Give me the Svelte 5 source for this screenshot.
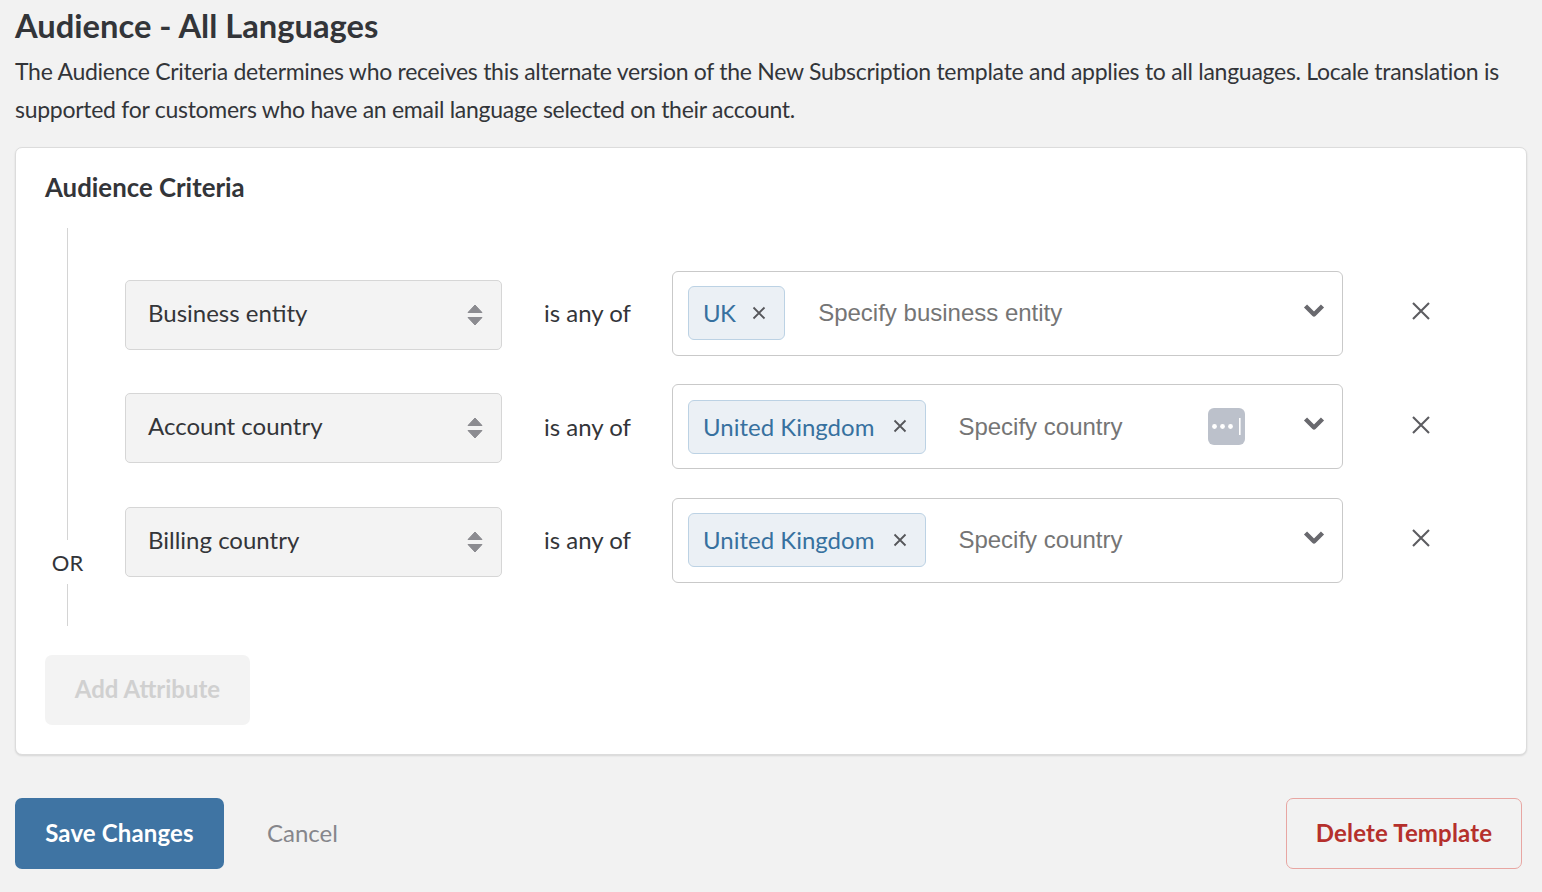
<script>
  const rows = [
    { attr: 'Business entity', chip: 'UK', placeholder: 'Specify business entity', keyIcon: false },
    { attr: 'Account country', chip: 'United Kingdom', placeholder: 'Specify country', keyIcon: true },
    { attr: 'Billing country', chip: 'United Kingdom', placeholder: 'Specify country', keyIcon: false }
  ]
</script>

<main class="page">
  <h1>Audience - All Languages</h1>
  <p class="intro">
    The Audience Criteria determines who receives this alternate version of the New Subscription template and applies to all languages. Locale translation is supported for customers who have an email language selected on their account.
  </p>

  <section class="card">
    <h2>Audience Criteria</h2>
    <div class="criteria">
      <div class="rail">
        <span class="rail-line"></span>
        <span class="rail-label">OR</span>
        <span class="rail-line short"></span>
      </div>
      <div class="rows">
        {#each rows as row}
          <div class="row">
            <div class="select">
              <span class="select-label">{row.attr}</span>
              <svg width="18" height="22" viewBox="0 0 18 22">
                <path d="M9 1 L16 8.5 H2 Z M2 13.5 H16 L9 21 Z" fill="#8b8b90" stroke="#8b8b90" stroke-width="1" stroke-linejoin="round" />
              </svg>
            </div>
            <span class="operator">is any of</span>
            <div class="control">
              <span class="chip" class:short={row.chip.length < 3}>
                <span class="chip-label">{row.chip}</span>
                <svg width="14" height="14" viewBox="0 0 14 14">
                  <path d="M1.5 1.5 L12.5 12.5 M12.5 1.5 L1.5 12.5" stroke="#55565a" stroke-width="1.8" fill="none" />
                </svg>
              </span>
              <span class="placeholder">{row.placeholder}</span>
              {#if row.keyIcon}
                <span class="key-icon">
                  <svg width="37" height="37" viewBox="0 0 37 37">
                    <rect width="37" height="37" rx="6" fill="#bcc1cb" />
                    <circle cx="6.5" cy="18.5" r="2.4" fill="#fff" />
                    <circle cx="14.5" cy="18.5" r="2.4" fill="#fff" />
                    <circle cx="22.5" cy="18.5" r="2.4" fill="#fff" />
                    <rect x="31" y="10" width="1.6" height="17" fill="#fff" />
                  </svg>
                </span>
              {/if}
              <svg class="chevron" width="22" height="15" viewBox="0 0 22 15">
                <path d="M2.5 3 L11 11.5 L19.5 3" stroke="#69696e" stroke-width="4.4" fill="none" stroke-linejoin="round" />
              </svg>
            </div>
            <svg class="remove" width="20" height="18" viewBox="0 0 20 18">
              <path d="M2 1 L18 17 M18 1 L2 17" stroke="#5c5c60" stroke-width="2.1" fill="none" />
            </svg>
          </div>
        {/each}
      </div>
    </div>
    <button class="add" disabled>Add Attribute</button>
  </section>

  <footer class="actions">
    <button class="save">Save Changes</button>
    <button class="cancel">Cancel</button>
    <button class="delete">Delete Template</button>
  </footer>
</main>

<style>
  :global(body) {
    background: #f2f2f2;
    font-family: 'Lato', 'Liberation Sans', sans-serif;
    color: #333539;
  }

  .page {
    height: 892px;
    box-sizing: border-box;
    padding: 0 15px;
    overflow: hidden;
  }

  h1 {
    margin: 0;
    padding-top: 6px;
    font-size: 32.7px;
    line-height: 40px;
    font-weight: 700;
  }

  .intro {
    margin: 6px 0 0;
    font-size: 23px;
    line-height: 38px;
    letter-spacing: -0.275px;
  }

  .card {
    margin-top: 19px;
    height: 608px;
    box-sizing: border-box;
    background: #fff;
    border: 1px solid #dcdcdc;
    border-radius: 7px;
    box-shadow: 0 1px 2px rgba(0, 0, 0, 0.12);
    padding: 0 29px;
  }

  h2 {
    margin: 0;
    padding-top: 22px;
    font-size: 25.8px;
    line-height: 34px;
    font-weight: 700;
  }

  .criteria {
    display: flex;
    margin-top: 24px;
  }

  .rail {
    width: 45px;
    display: flex;
    flex-direction: column;
    align-items: center;
  }

  .rail-line {
    flex: 1;
    width: 1px;
    background: #d4d4d4;
  }

  .rail-line.short {
    flex: none;
    height: 42px;
  }

  .rail-label {
    height: 44px;
    font-size: 22px;
    line-height: 46px;
  }

  .rows {
    margin-left: 35px;
    padding: 42.9px 0 43.1px;
    display: flex;
    flex-direction: column;
    gap: 28.5px;
  }

  .row {
    display: flex;
    align-items: center;
    height: 85px;
  }

  .select {
    width: 377px;
    height: 70px;
    margin-top: 3px;
    box-sizing: border-box;
    background: #f3f3f3;
    border: 1px solid #d6d6d6;
    border-radius: 5px;
    padding: 0 17px 0 22px;
    display: flex;
    align-items: center;
    justify-content: space-between;
    font-size: 24px;
  }

  .select-label {
    margin-bottom: 5px;
  }

  .operator {
    width: 128px;
    margin-left: 42px;
    margin-bottom: 1px;
    font-size: 24px;
    flex: none;
  }

  .control {
    width: 671px;
    height: 85px;
    box-sizing: border-box;
    background: #fff;
    border: 1px solid #c9c9c9;
    border-radius: 6px;
    padding: 0 17px 0 15px;
    display: flex;
    align-items: center;
  }

  .chip {
    height: 54px;
    box-sizing: border-box;
    padding: 0 18px 1px 14px;
    display: inline-flex;
    align-items: center;
    gap: 19px;
    background: #ebf0f5;
    border: 1px solid #bcd2e4;
    border-radius: 6px;
    color: #37719f;
    font-size: 24px;
  }

  .chip.short {
    gap: 17px;
  }

  .chip.short .chip-label {
    letter-spacing: -0.7px;
  }

  .placeholder {
    margin-left: 32px;
    font-family: 'Liberation Sans', Arial, sans-serif;
    font-size: 24px;
    color: #757575;
  }

  .chip.short + .placeholder {
    margin-left: 33px;
  }

  .key-icon {
    display: flex;
    margin-left: auto;
    margin-right: 58px;
  }

  .chevron {
    margin-top: -6px;
  }

  .placeholder + .chevron {
    margin-left: auto;
  }

  .remove {
    margin-left: 67.5px;
    margin-top: -4px;
  }

  button {
    font-family: inherit;
    font-size: 24px;
    border-radius: 7px;
    cursor: pointer;
  }

  .add {
    display: block;
    margin-top: 29px;
    width: 205px;
    height: 70px;
    padding: 0 0 2px;
    border: 0;
    background: #f3f3f3;
    color: #d0d0d0;
    font-weight: 700;
  }

  .actions {
    margin-top: 43px;
    display: flex;
    align-items: stretch;
    height: 71px;
  }

  .save {
    width: 209px;
    padding: 0 0 2px;
    border: 0;
    background: #3f74a3;
    color: #fff;
    font-weight: 700;
    letter-spacing: 0.15px;
  }

  .cancel {
    margin-left: 43px;
    padding: 0 0 2px;
    border: 0;
    background: none;
    color: #86868b;
  }

  .delete {
    margin-left: auto;
    margin-right: 5px;
    width: 236px;
    padding: 0 0 2px;
    background: none;
    border: 1px solid #e8a6a2;
    color: #b5302c;
    font-weight: 700;
    letter-spacing: 0.15px;
  }
</style>
